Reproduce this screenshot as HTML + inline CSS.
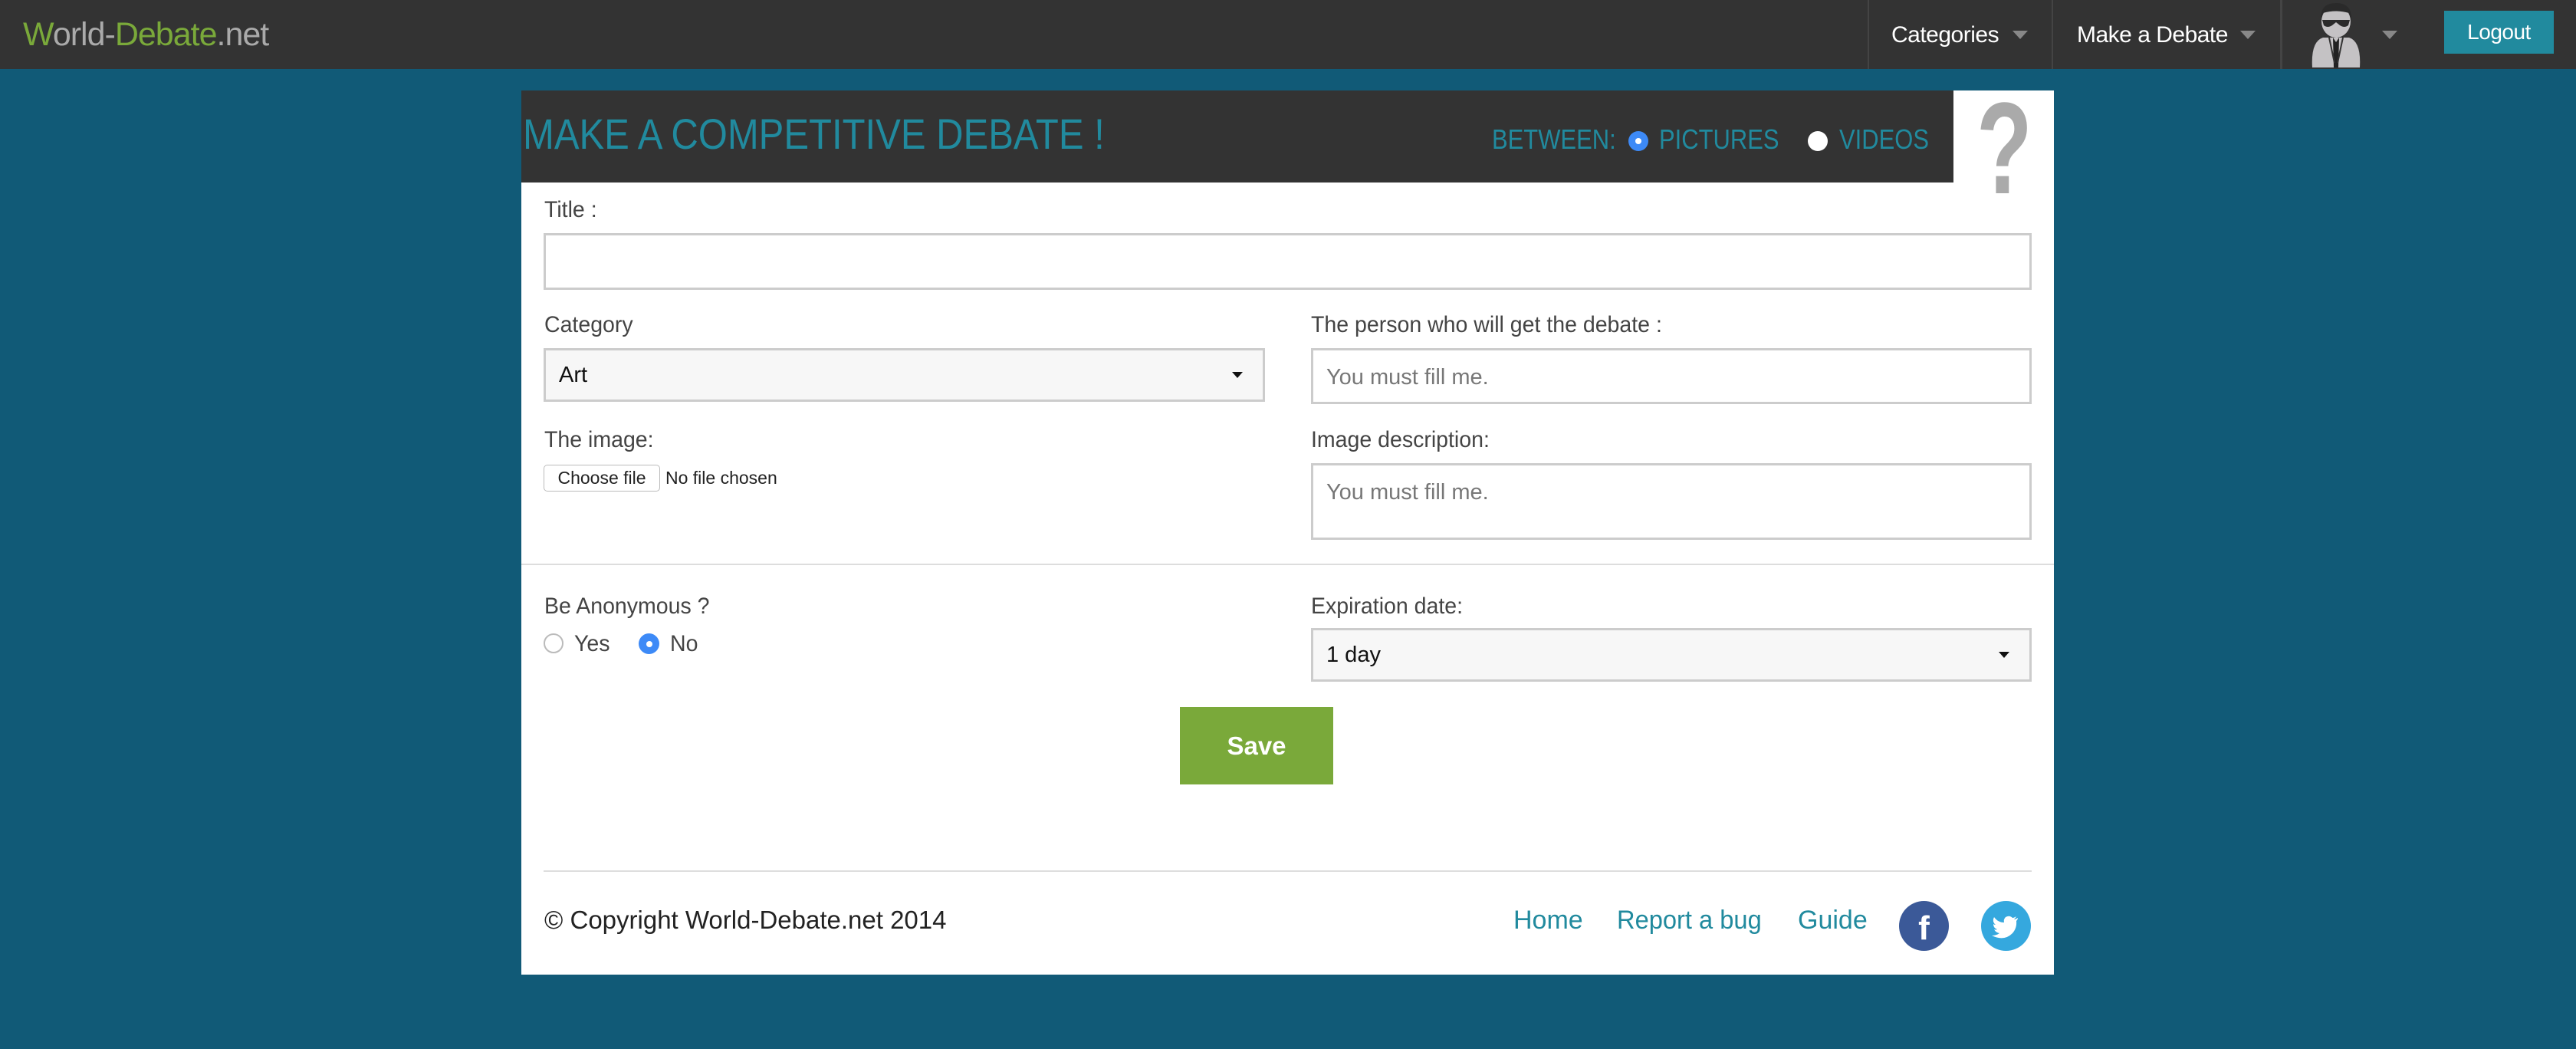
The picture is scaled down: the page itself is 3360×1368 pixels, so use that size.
<!DOCTYPE html>
<html><head><meta charset="utf-8"><style>
*{box-sizing:border-box;margin:0;padding:0}
body{width:3360px;height:1368px;background:#115a77;font-family:"Liberation Sans","DejaVu Sans",sans-serif;position:relative;overflow:hidden;color:#333}
.a{position:absolute}
.nav{left:0;top:0;width:3360px;height:90px;background:#333}
.lbl{font-size:30px;color:#444;white-space:nowrap;transform-origin:0 0;transform:scaleX(0.95)}
.inp{border:3px solid #ccc;background:#fff}
.sel{border:3px solid #ccc;background:#f7f7f7;font-size:29px;color:#111;padding:0 0 0 17px;display:flex;align-items:center}
.caret{border-left:7px solid transparent;border-right:7px solid transparent;border-top:8px solid #111}
.ph{font-size:29px;color:#777}
.navt{color:#fff;font-size:30px;letter-spacing:-0.5px}
.navc{border-left:10px solid transparent;border-right:10px solid transparent;border-top:11px solid #888}
.vdiv{width:2px;height:90px;background:#444;top:0}
.hd{font-size:36px;color:#218a9e;white-space:nowrap;transform-origin:0 0;transform:scaleX(0.86)}
</style></head><body>
<div class="a nav"></div>
<div class="a" style="left:30px;top:21px;font-size:43px;letter-spacing:-1px"><span style="color:#7aa93a">W</span><span style="color:#aaa">orld-</span><span style="color:#7aa93a">Debate</span><span style="color:#aaa">.net</span></div>
<div class="a vdiv" style="left:2436px"></div>
<div class="a vdiv" style="left:2676px"></div>
<div class="a vdiv" style="left:2974px;width:3px"></div>
<div class="a navt" style="left:2467px;top:29px">Categories</div>
<div class="a navc" style="left:2625px;top:40px"></div>
<div class="a navt" style="left:2709px;top:29px">Make a Debate</div>
<div class="a navc" style="left:2922px;top:40px"></div>
<svg class="a" style="left:3012px;top:2px" width="70" height="86" viewBox="0 0 70 86">
<path d="M4 86 Q2 52 18 47 L52 47 Q68 52 66 86 Z" fill="#c4c2c4"/>
<path d="M31 47 L35 53 L39 47 L38 86 L32 86 Z" fill="#222"/>
<path d="M26 47 L33 80 M44 47 L37 80" stroke="#333" stroke-width="2"/>
<ellipse cx="35" cy="26" rx="19" ry="21" fill="#c4c2c4"/>
<path d="M15 24 Q14 2 35 2 Q56 2 55 24 L52 15 Q35 10 18 15 Z" fill="#2a2a2a"/>
<path d="M17 24 L53 24 L51 31 Q46 35 40 31 L35 27 L30 31 Q24 35 19 31 Z" fill="#2a2a2a"/>
</svg>
<div class="a navc" style="left:3107px;top:40px"></div>
<div class="a" style="left:3188px;top:14px;width:143px;height:56px;background:#218a9e;color:#fff;font-size:28px;display:flex;align-items:center;justify-content:center;letter-spacing:-0.5px">Logout</div>

<div class="a" style="left:680px;top:118px;width:1999px;height:1153px;background:#fff"></div>
<div class="a" style="left:680px;top:118px;width:1868px;height:120px;background:#333"></div>
<div class="a" style="left:682px;top:142px;font-size:56px;color:#218a9e;white-space:nowrap;transform-origin:0 0;transform:scaleX(0.875)">MAKE A COMPETITIVE DEBATE !</div>
<div class="a hd" style="left:1946px;top:161px">BETWEEN:</div>
<div class="a" style="left:2124px;top:171px;width:26px;height:26px;border-radius:50%;background:#3d8af7"></div>
<div class="a" style="left:2133px;top:180px;width:8px;height:8px;border-radius:50%;background:#fff"></div>
<div class="a hd" style="left:2164px;top:161px">PICTURES</div>
<div class="a" style="left:2358px;top:171px;width:26px;height:26px;border-radius:50%;background:#fff"></div>
<div class="a hd" style="left:2399px;top:161px">VIDEOS</div>
<div class="a" style="left:2578px;top:96px;font-size:170px;font-weight:bold;color:#aaa;font-family:'Liberation Sans',sans-serif;transform:scaleX(0.7);transform-origin:0 0">?</div>

<div class="a lbl" style="left:710px;top:257px">Title :</div>
<div class="a inp" style="left:709px;top:304px;width:1941px;height:74px"></div>

<div class="a lbl" style="left:710px;top:407px">Category</div>
<div class="a sel" style="left:709px;top:454px;width:941px;height:70px">Art<div class="caret" style="margin-left:auto;margin-right:26px"></div></div>
<div class="a lbl" style="left:1710px;top:407px">The person who will get the debate :</div>
<div class="a inp" style="left:1710px;top:454px;width:940px;height:73px"><div class="ph" style="padding:19px 0 0 17px">You must fill me.</div></div>

<div class="a lbl" style="left:710px;top:557px">The image:</div>
<div class="a" style="left:709px;top:606px;width:152px;height:35px;border:1px solid #bbb;border-radius:5px;font-size:23px;color:#222;display:flex;align-items:center;justify-content:center">Choose file</div>
<div class="a" style="left:868px;top:610px;font-size:23px;color:#222">No file chosen</div>
<div class="a lbl" style="left:1710px;top:557px">Image description:</div>
<div class="a inp" style="left:1710px;top:604px;width:940px;height:100px"><div class="ph" style="padding:19px 0 0 17px">You must fill me.</div></div>

<div class="a" style="left:680px;top:735px;width:1999px;height:2px;background:#ddd"></div>

<div class="a lbl" style="left:710px;top:774px">Be Anonymous ?</div>
<div class="a" style="left:709px;top:826px;width:26px;height:26px;border-radius:50%;border:2px solid #bbb"></div>
<div class="a lbl" style="left:749px;top:823px">Yes</div>
<div class="a" style="left:833px;top:826px;width:27px;height:27px;border-radius:50%;background:#3d8af7"></div>
<div class="a" style="left:843px;top:836px;width:8px;height:8px;border-radius:50%;background:#fff"></div>
<div class="a lbl" style="left:874px;top:823px">No</div>
<div class="a lbl" style="left:1710px;top:774px">Expiration date:</div>
<div class="a sel" style="left:1710px;top:819px;width:940px;height:70px">1 day<div class="caret" style="margin-left:auto;margin-right:26px"></div></div>

<div class="a" style="left:1539px;top:922px;width:200px;height:101px;background:#7aa93a;color:#fff;font-size:33px;font-weight:bold;display:flex;align-items:center;justify-content:center">Save</div>

<div class="a" style="left:709px;top:1135px;width:1941px;height:2px;background:#ddd"></div>
<div class="a" style="left:710px;top:1181px;font-size:33px;color:#222">© Copyright World-Debate.net 2014</div>
<div class="a" style="left:1974px;top:1181px;font-size:34px;color:#218a9e">Home</div>
<div class="a" style="left:2109px;top:1181px;font-size:34px;color:#218a9e;transform:scaleX(0.96);transform-origin:0 0">Report a bug</div>
<div class="a" style="left:2345px;top:1181px;font-size:34px;color:#218a9e">Guide</div>
<div class="a" style="left:2477px;top:1175px;width:65px;height:65px;border-radius:50%;background:#3b5998;color:#fff;font-size:44px;font-weight:bold;text-align:center;line-height:72px">f</div>
<svg class="a" style="left:2584px;top:1175px" width="65" height="65" viewBox="0 0 65 65"><circle cx="32.5" cy="32.5" r="32.5" fill="#35a8de"/><path d="M48 22 Q45 24 43 24 Q45 22 46 20 Q43 22 41 22 Q37 18 32 21 Q29 24 30 28 Q22 28 17 21 Q14 27 19 31 Q17 31 16 30 Q16 35 21 37 Q19 38 17 37 Q19 41 24 42 Q20 45 14 45 Q30 53 41 42 Q47 35 46 26 Q48 24 48 22Z" fill="#fff"/></svg>
</body></html>
